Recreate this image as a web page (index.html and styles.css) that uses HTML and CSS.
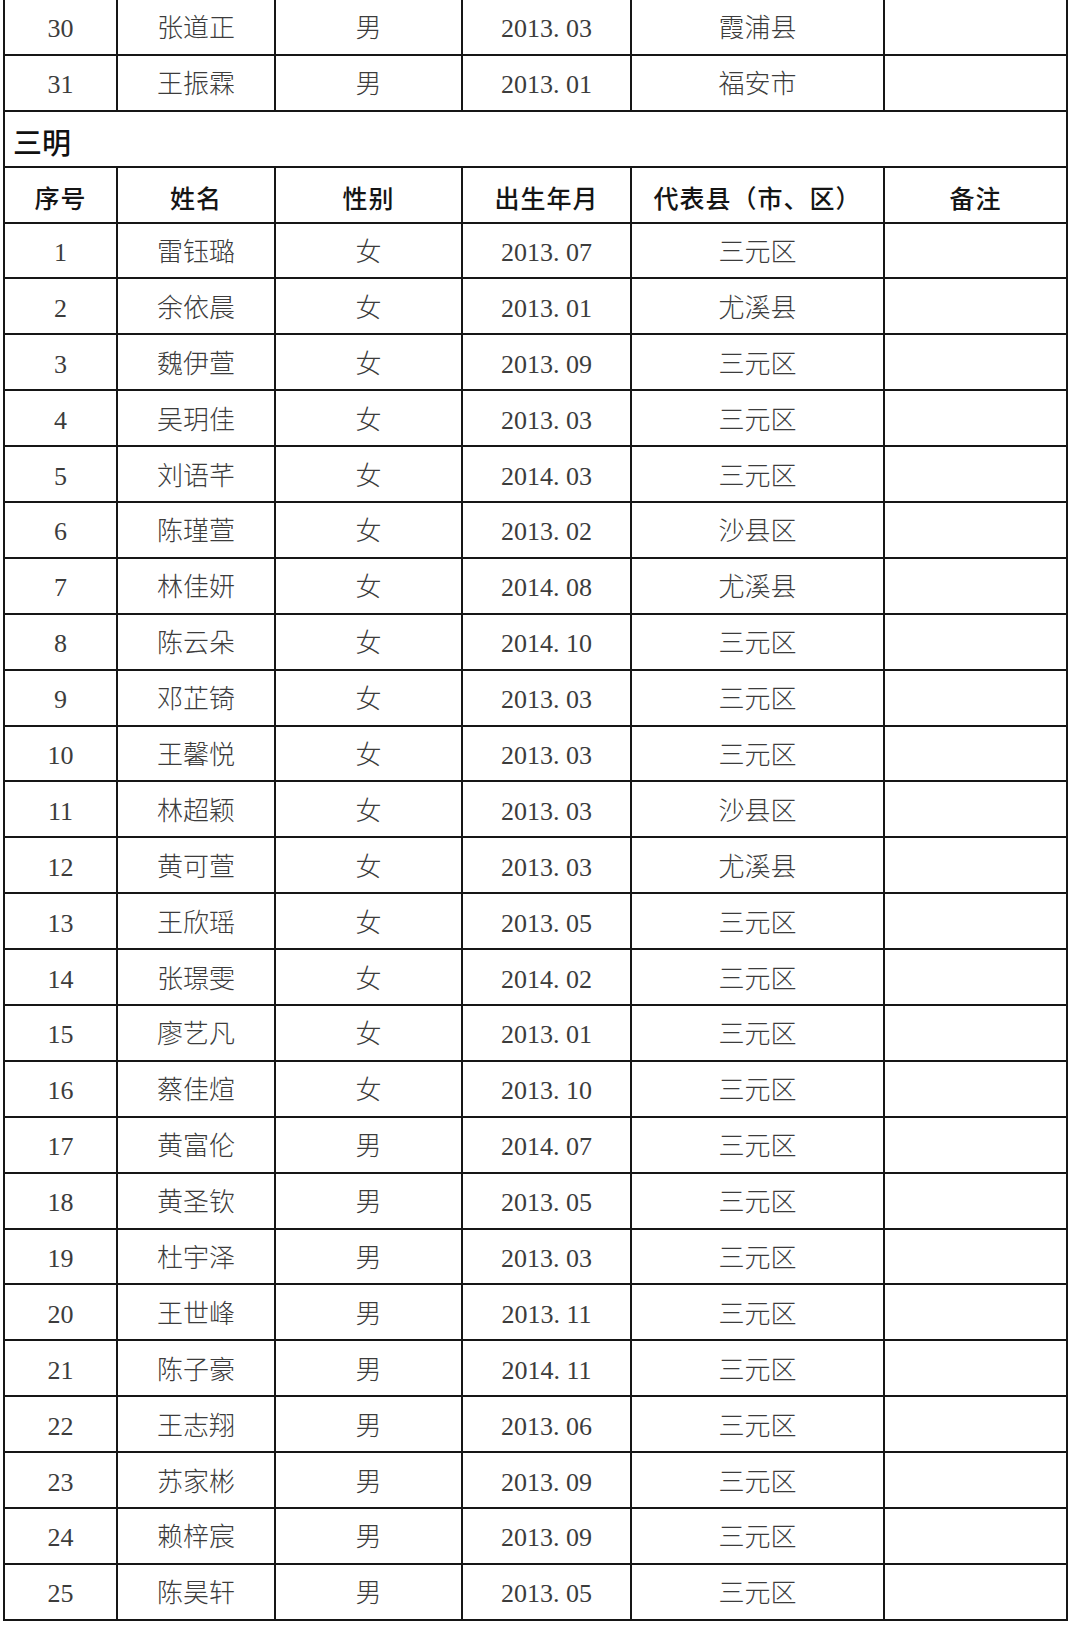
FILE: index.html
```html
<!DOCTYPE html>
<html lang="zh-CN">
<head>
<meta charset="utf-8">
<title>三明名单</title>
<link rel="stylesheet" href="styles.css">
</head>
<body>
<div class="page">
<table class="roster">
<colgroup>
<col class="c1"><col class="c2"><col class="c3"><col class="c4"><col class="c5"><col class="c6">
</colgroup>
<tbody>
<tr><td>30</td><td>张道正</td><td>男</td><td>2013. 03</td><td>霞浦县</td><td></td></tr>
<tr><td>31</td><td>王振霖</td><td>男</td><td>2013. 01</td><td>福安市</td><td></td></tr>
<tr class="region"><td colspan="6">三明</td></tr>
<tr class="head"><td>序号</td><td>姓名</td><td>性别</td><td>出生年月</td><td>代表县（市、区）</td><td>备注</td></tr>
<tr><td>1</td><td>雷钰璐</td><td>女</td><td>2013. 07</td><td>三元区</td><td></td></tr>
<tr><td>2</td><td>余依晨</td><td>女</td><td>2013. 01</td><td>尤溪县</td><td></td></tr>
<tr><td>3</td><td>魏伊萱</td><td>女</td><td>2013. 09</td><td>三元区</td><td></td></tr>
<tr><td>4</td><td>吴玥佳</td><td>女</td><td>2013. 03</td><td>三元区</td><td></td></tr>
<tr><td>5</td><td>刘语芊</td><td>女</td><td>2014. 03</td><td>三元区</td><td></td></tr>
<tr><td>6</td><td>陈瑾萱</td><td>女</td><td>2013. 02</td><td>沙县区</td><td></td></tr>
<tr><td>7</td><td>林佳妍</td><td>女</td><td>2014. 08</td><td>尤溪县</td><td></td></tr>
<tr><td>8</td><td>陈云朵</td><td>女</td><td>2014. 10</td><td>三元区</td><td></td></tr>
<tr><td>9</td><td>邓芷锜</td><td>女</td><td>2013. 03</td><td>三元区</td><td></td></tr>
<tr><td>10</td><td>王馨悦</td><td>女</td><td>2013. 03</td><td>三元区</td><td></td></tr>
<tr><td>11</td><td>林超颖</td><td>女</td><td>2013. 03</td><td>沙县区</td><td></td></tr>
<tr><td>12</td><td>黄可萱</td><td>女</td><td>2013. 03</td><td>尤溪县</td><td></td></tr>
<tr><td>13</td><td>王欣瑶</td><td>女</td><td>2013. 05</td><td>三元区</td><td></td></tr>
<tr><td>14</td><td>张璟雯</td><td>女</td><td>2014. 02</td><td>三元区</td><td></td></tr>
<tr><td>15</td><td>廖艺凡</td><td>女</td><td>2013. 01</td><td>三元区</td><td></td></tr>
<tr><td>16</td><td>蔡佳煊</td><td>女</td><td>2013. 10</td><td>三元区</td><td></td></tr>
<tr><td>17</td><td>黄富伦</td><td>男</td><td>2014. 07</td><td>三元区</td><td></td></tr>
<tr><td>18</td><td>黄圣钦</td><td>男</td><td>2013. 05</td><td>三元区</td><td></td></tr>
<tr><td>19</td><td>杜宇泽</td><td>男</td><td>2013. 03</td><td>三元区</td><td></td></tr>
<tr><td>20</td><td>王世峰</td><td>男</td><td>2013. 11</td><td>三元区</td><td></td></tr>
<tr><td>21</td><td>陈子豪</td><td>男</td><td>2014. 11</td><td>三元区</td><td></td></tr>
<tr><td>22</td><td>王志翔</td><td>男</td><td>2013. 06</td><td>三元区</td><td></td></tr>
<tr><td>23</td><td>苏家彬</td><td>男</td><td>2013. 09</td><td>三元区</td><td></td></tr>
<tr><td>24</td><td>赖梓宸</td><td>男</td><td>2013. 09</td><td>三元区</td><td></td></tr>
<tr><td>25</td><td>陈昊轩</td><td>男</td><td>2013. 05</td><td>三元区</td><td></td></tr>
</tbody>
</table>
</div>
</body>
</html>
```
FILE: styles.css
```css
html, body {
  margin: 0;
  padding: 0;
  background: #ffffff;
}
.page {
  padding: 0 0 0 3px;
  overflow: hidden;
  height: 1626px;
}
.roster {
  border-collapse: collapse;
  table-layout: fixed;
  width: 1065px;
  margin-top: -2px;
  font-family: "Liberation Serif", "Noto Sans CJK SC", serif;
  font-weight: 300;
  font-size: 26px;
  color: #3c3c3c;
}
.c1 { width: 113px; }
.c2 { width: 158px; }
.c3 { width: 187px; }
.c4 { width: 169px; }
.c5 { width: 253px; }
.c6 { width: 183px; }
.roster td {
  border: 2px solid #161616;
  height: 48.9px;
  padding: 5px 0 0 0;
  text-align: center;
  vertical-align: middle;
  line-height: 1;
}
.roster .region td {
  text-align: left;
  padding-left: 8px;
  font-family: "Noto Sans CJK SC", sans-serif;
  font-weight: 500;
  font-size: 29px;
  color: #111111;
}
.roster .head td {
  font-family: "Noto Sans CJK SC", sans-serif;
  font-weight: 500;
  font-size: 25px;
  letter-spacing: 1px;
  color: #151515;
}
```
